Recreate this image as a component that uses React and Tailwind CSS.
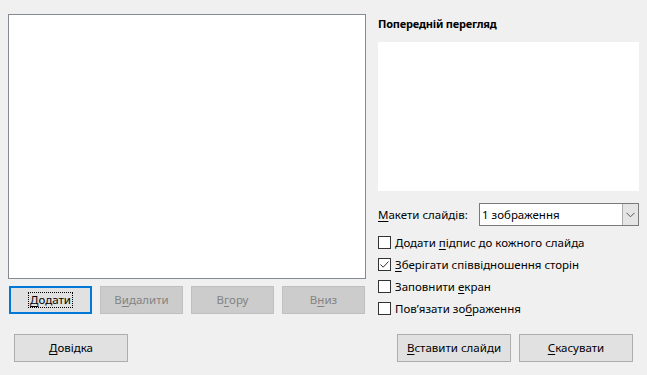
import React from "react";

const U = ({ children }) => <span className="underline underline-offset-2">{children}</span>;

function Btn({ children, w = "w-[83px]", disabled, focused }) {
  if (focused) {
    return (
      <div className={`${w} h-[28px] border-2 border-[#0078d7] bg-[#e1e1e1] flex items-center justify-center text-[#000]`}>
        <span className="outline outline-1 outline-dotted outline-black px-[1px] leading-[14px]">{children}</span>
      </div>
    );
  }
  return (
    <div
      className={`${w} h-[28px] border flex items-center justify-center ${
        disabled ? "border-[#bfbfbf] bg-[#cccccc] text-[#838383]" : "border-[#adadad] bg-[#e1e1e1] text-black"
      }`}
    >
      {children}
    </div>
  );
}

function Check({ checked, children }) {
  return (
    <div className="flex items-center h-[13px]">
      <div className="w-[13px] h-[13px] border border-[#333333] bg-white flex items-center justify-center">
        {checked && (
          <svg width="11" height="11" viewBox="0 0 11 11">
            <path d="M1.5 5.5 L4.2 8.2 L9.5 2.5" fill="none" stroke="#333" strokeWidth="1" />
          </svg>
        )}
      </div>
      <span className="ml-[4px] leading-[14px]">{children}</span>
    </div>
  );
}

export default function App() {
  return (
    <div
      className="w-[647px] h-[375px] bg-[#f0f0f0] text-[11.5px] text-black overflow-hidden"
      style={{ fontFamily: '"Noto Sans", "Open Sans", sans-serif' }}
    >
      <div className="flex pt-[14px]">
        <div className="pl-[8px] w-[366px]">
          <div className="w-[358px] h-[265px] bg-white border border-[#868a91]" />
          <div className="flex gap-[8px] mt-[7px] pl-[1px]">
            <Btn focused><U>Д</U>одати</Btn>
            <Btn disabled>В<U>и</U>далити</Btn>
            <Btn disabled>В<U>г</U>ору</Btn>
            <Btn disabled>В<U>н</U>из</Btn>
          </div>
        </div>
        <div className="ml-[12px] w-[261px] flex flex-col">
          <div className="font-bold h-[18px] leading-[18px] mt-[1px] text-[11px] tracking-[-0.2px]">Попередній перегляд</div>
          <div className="mt-[9px] h-[149px] bg-white" />
          <div className="mt-[12px] flex items-center h-[23px]">
            <span className="w-[101px]"><U>М</U>акети слайдів:</span>
            <div className="flex-1 h-[23px] bg-white border border-[#7a7a7a] flex items-stretch">
              <div className="flex-1 flex items-center pl-[2px] leading-[14px]">1 зображення</div>
              <div className="w-[16px] bg-[#e5e5e5] border-l border-[#acacac] flex items-center justify-center">
                <svg width="9" height="6" viewBox="0 0 9 6">
                  <path d="M0.5 0.8 L4.5 4.8 L8.5 0.8" fill="none" stroke="#555" strokeWidth="1" />
                </svg>
              </div>
            </div>
          </div>
          <div className="mt-[10px] flex flex-col gap-[9px]">
            <Check>Додати <U>п</U>ідпис до кожного слайда</Check>
            <Check checked><U>З</U>берігати співвідношення сторін</Check>
            <Check>Заповнити <U>е</U>кран</Check>
            <Check>Пов’язати зо<U>б</U>раження</Check>
          </div>
        </div>
      </div>
      <div className="flex mt-[19px] pl-[14px]">
        <Btn w="w-[114px]"><U>Д</U>овідка</Btn>
        <div className="ml-[269px] flex gap-[8px]">
          <Btn w="w-[114px]"><U>В</U>ставити слайди</Btn>
          <Btn w="w-[114px]"><U>С</U>касувати</Btn>
        </div>
      </div>
    </div>
  );
}
